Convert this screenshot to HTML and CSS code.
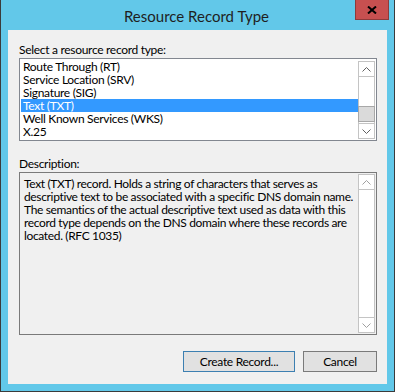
FILE: index.html
```html
<!DOCTYPE html>
<html lang="en">
  <head>
    <meta charset="UTF-8">
    <title>Resource Record Type</title>
    <link rel="stylesheet" href="styles.css">
  </head>
  <body>
    <div class="window">
      <div class="titlebar">
        <span class="title">Resource Record Type</span>
        <button type="button" class="close-btn">
          <svg width="10" height="8" viewBox="0 0 10 8"><path d="M1 0.5 L9 7.5 M9 0.5 L1 7.5" stroke="#000" stroke-width="2"/></svg>
        </button>
      </div>

      <div class="client">
        <label class="field-label">Select a resource record type:</label>
        <div class="listbox">
          <ul class="items">
            <li>Route Through (RT)</li>
            <li>Service Location (SRV)</li>
            <li>Signature (SIG)</li>
            <li class="selected">Text (TXT)</li>
            <li>Well Known Services (WKS)</li>
            <li>X.25</li>
          </ul>
          <div class="scrollbar">
            <div class="arrow">
              <svg width="9" height="5" viewBox="0 0 9 5"><path d="M0.5 4.5 L4.5 0.5 L8.5 4.5" fill="none" stroke="#606060"/></svg>
            </div>
            <div class="track"><div class="thumb"></div></div>
            <div class="arrow">
              <svg width="9" height="5" viewBox="0 0 9 5"><path d="M0.5 0.5 L4.5 4.5 L8.5 0.5" fill="none" stroke="#606060"/></svg>
            </div>
          </div>
        </div>

        <label class="field-label desc-label">Description:</label>
        <div class="description">
          <p class="desc-text">Text (TXT) record. Holds a string of characters that serves as descriptive text to be associated with a specific DNS domain name. The semantics of the actual descriptive text used as data with this record type depends on the DNS domain where these records are located. (RFC 1035)</p>
          <div class="scrollbar">
            <div class="arrow">
              <svg width="9" height="5" viewBox="0 0 9 5"><path d="M0.5 4.5 L4.5 0.5 L8.5 4.5" fill="none" stroke="#a0a0a0"/></svg>
            </div>
            <div class="track"></div>
            <div class="arrow">
              <svg width="9" height="5" viewBox="0 0 9 5"><path d="M0.5 0.5 L4.5 4.5 L8.5 0.5" fill="none" stroke="#a0a0a0"/></svg>
            </div>
          </div>
        </div>

        <div class="buttons">
          <button type="button" class="btn btn-default">Create Record...</button>
          <button type="button" class="btn btn-cancel">Cancel</button>
        </div>
      </div>
    </div>
  </body>
</html>
```

FILE: styles.css
```css
html, body {
  margin: 0;
  padding: 0;
}

body {
  font-family: Lato, "Noto Sans", sans-serif;
  font-size: 12px;
  letter-spacing: -0.3px;
  color: #000;
  background: #fff;
}

.window {
  width: 395px;
  height: 392px;
  box-sizing: border-box;
  background: #62c8e9;
  border: 1px solid #3b3b3b;
  border-top: none;
  display: flex;
  flex-direction: column;
}

.titlebar {
  position: relative;
  height: 30px;
  display: flex;
  align-items: center;
  justify-content: center;
}

.title {
  font-size: 15px;
  letter-spacing: 0;
  color: #1f1f1f;
  margin-right: 2px;
  margin-top: 1px;
}

.close-btn {
  position: absolute;
  right: 5px;
  top: 0;
  width: 34px;
  height: 20px;
  padding: 0;
  background: #c75050;
  border: 1px solid #8d3b3b;
  border-top: none;
  display: flex;
  align-items: center;
  justify-content: center;
}

.client {
  margin: 0 7px;
  height: 354px;
  background: #f0f0f0;
  padding: 12px 10px 0 11px;
  box-sizing: border-box;
  display: flex;
  flex-direction: column;
}

.field-label {
  display: block;
  line-height: 16px;
  height: 16px;
}

.desc-label {
  margin-top: 15px;
}

.listbox {
  height: 83px;
  box-sizing: border-box;
  border: 1px solid #828790;
  background: #fff;
  display: flex;
  padding: 1px;
}

.items {
  list-style: none;
  margin: 0;
  padding: 0;
  flex: 1;
}

.items li {
  height: 13px;
  line-height: 13px;
  padding-left: 2px;
  white-space: nowrap;
}

.items li.selected {
  background: #3399ff;
  color: #fff;
}

.scrollbar {
  width: 17px;
  flex-shrink: 0;
  box-sizing: border-box;
  display: flex;
  flex-direction: column;
  background: #fff;
}

.listbox .scrollbar {
  margin-top: 1px;
}

.arrow {
  height: 16px;
  box-sizing: border-box;
  border: 1px solid #c4c4c4;
  display: flex;
  align-items: center;
  justify-content: center;
  background: #fff;
}

.track {
  flex: 1;
  display: flex;
  flex-direction: column;
  justify-content: flex-end;
  border-left: 1px solid #c4c4c4;
  border-right: 1px solid #c4c4c4;
  padding-bottom: 1px;
}

.thumb {
  height: 16px;
  box-sizing: border-box;
  margin: 0 -1px;
  background: #dadada;
  border: 1px solid #a8a8a8;
}

.description {
  height: 163px;
  box-sizing: border-box;
  border: 1px solid #7a7a7a;
  background: #f0f0f0;
  display: flex;
  padding: 1px 1px 1px 0;
}

.desc-text {
  flex: 1;
  margin: 0;
  padding: 3px 0 0 4px;
  line-height: 13px;
  letter-spacing: -0.35px;
}

.buttons {
  margin-top: 16px;
  display: flex;
  justify-content: flex-end;
  gap: 8px;
}

.btn {
  height: 21px;
  box-sizing: border-box;
  padding: 0;
  font-family: Lato, "Noto Sans", sans-serif;
  font-size: 12px;
  letter-spacing: -0.3px;
  color: #000;
  background: #e1e1e1;
  border: 1px solid #adadad;
  line-height: 18px;
}

.btn-default {
  width: 112px;
  border-color: #3c7fb1;
}

.btn-cancel {
  width: 74px;
  border-color: #7a7a7a;
}
```
